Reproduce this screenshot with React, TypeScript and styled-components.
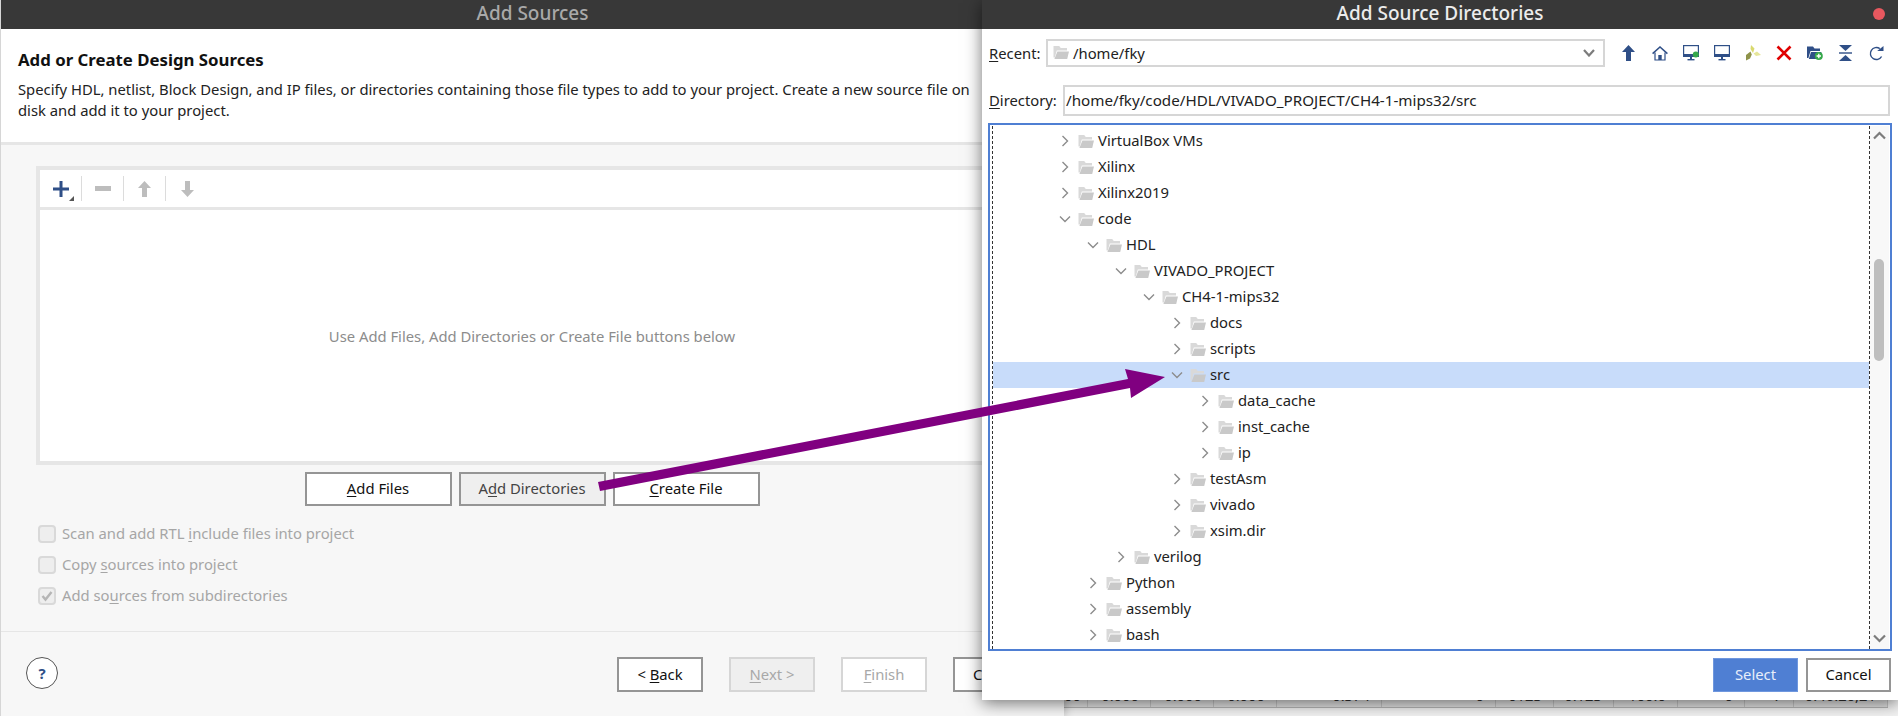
import React from "react";
import styled, { createGlobalStyle } from "styled-components";

const Global = createGlobalStyle`
  html, body { margin: 0; padding: 0; width: 1898px; height: 716px; overflow: hidden; }
  body { font-family: "Noto Sans", "Liberation Sans", sans-serif; font-size: 14.8px; color: #1a1a1a; background: #f3f3f3; }
  * { box-sizing: border-box; }
`;

const Desktop = styled.div`
  position: relative;
  display: flex;
  width: 1898px;
  height: 716px;
  overflow: hidden;
`;
const TitleBar = styled.div<{ $active?: boolean }>`
  flex: none;
  height: 29px;
  background: #383838;
  display: flex;
  align-items: center;
  justify-content: center;
  padding-bottom: 2px;
  font-size: 19px;
  font-weight: 500;
  line-height: 27px;
  color: ${(p) => (p.$active ? "#ececec" : "#a9a9a9")};
`;
const LeftDialog = styled.div`
  flex: none;
  width: 1064px;
  height: 716px;
  display: flex;
  flex-direction: column;
  background: #f7f7f7;
  border-left: 1px solid #d6d6d6;
  box-shadow: 0 0 10px rgba(0, 0, 0, 0.3);
  position: relative;
  z-index: 1;
`;
const Header = styled.div`
  flex: none;
  height: 116px;
  background: #fff;
  border-bottom: 3px solid #e6e6e6;
  padding: 19px 0 0 17px;
`;
const Heading = styled.div`
  font-size: 16.8px;
  font-weight: 700;
  line-height: 24px;
  color: #111;
`;
const Description = styled.div`
  margin-top: 7px;
  width: 968px;
  font-size: 14.8px;
  line-height: 21px;
  color: #222;
`;
const Content = styled.div`
  flex: 1;
  padding: 21px 35px 0;
  display: flex;
  flex-direction: column;
`;
const Panel = styled.div`
  height: 299px;
  width: 992px;
  border: 4px solid #e6e6e6;
  background: #fff;
  display: flex;
  flex-direction: column;
`;
const PanelToolbar = styled.div`
  flex: none;
  height: 40px;
  padding-top: 6px;
  border-bottom: 3px solid #e6e6e6;
  display: flex;
  align-items: flex-start;
`;
const ToolButton = styled.div<{ $last?: boolean }>`
  position: relative;
  width: 42px;
  height: 25px;
  display: flex;
  align-items: center;
  justify-content: center;
  border-right: ${(p) => (p.$last ? "none" : "1px solid #dcdcdc")};
`;
const CornerMark = styled.span`
  position: absolute;
  right: 7px;
  bottom: 0;
  width: 0;
  height: 0;
  border-left: 5px solid transparent;
  border-bottom: 5px solid #555;
`;
const PanelHint = styled.div`
  flex: 1;
  display: flex;
  align-items: center;
  justify-content: center;
  color: #8c8c8c;
  font-size: 14.8px;
`;
const ActionRow = styled.div`
  width: 992px;
  margin-top: 7px;
  display: flex;
  justify-content: center;
  gap: 7px;
`;
const Button = styled.div<{ $w: number; $h: number; $state?: "hover" | "off" | "offFill" }>`
  flex: none;
  width: ${(p) => p.$w}px;
  height: ${(p) => p.$h}px;
  padding-bottom: 2px;
  display: flex;
  align-items: center;
  justify-content: center;
  white-space: pre;
  font-size: 14.8px;
  border: 2px solid ${(p) => (p.$state === "off" || p.$state === "offFill" ? "#d6d6d6" : "#959595")};
  background: ${(p) => (p.$state === "hover" || p.$state === "offFill" ? "#efefef" : "#fff")};
  color: ${(p) => (p.$state === "hover" ? "#444" : p.$state ? "#a8a8a8" : "#111")};
`;
const Mn = styled.span`
  text-decoration: underline;
  text-underline-offset: 2px;
`;
const Options = styled.div`
  margin: 19px 0 0 2px;
  display: flex;
  flex-direction: column;
  gap: 13px;
`;
const Option = styled.div`
  height: 18px;
  display: flex;
  align-items: center;
  gap: 6px;
  color: #a6a6a6;
  font-size: 14.8px;
`;
const OptionText = styled.span`
  margin-top: -2px;
`;
const CheckBox = styled.div`
  width: 18px;
  height: 18px;
  border: 2px solid #d9d9d9;
  border-radius: 4px;
  background: #eeeeee;
  display: flex;
  align-items: center;
  justify-content: center;
`;
const Footer = styled.div`
  flex: none;
  height: 85px;
  border-top: 1px solid #e6e6e6;
  padding: 25px 25px 0;
  display: flex;
  justify-content: space-between;
  align-items: flex-start;
`;
const HelpButton = styled.div`
  width: 32px;
  height: 32px;
  border-radius: 50%;
  border: 1px solid #555;
  background: #fff;
  display: flex;
  align-items: center;
  justify-content: center;
  color: #2f4f87;
  font-size: 15px;
  font-weight: 700;
`;
const NavButtons = styled.div`
  display: flex;
  gap: 26px;
`;

const BackWindow = styled.div`
  flex: 1;
  padding-bottom: 8px;
  display: flex;
  flex-direction: column;
  justify-content: flex-end;
  background: #f3f3f3;
`;
const TableRow = styled.div`
  height: 18px;
  width: 824px;
  display: flex;
  border-bottom: 1px solid #b8b8b8;
  font-size: 14.8px;
  line-height: 11px;
  color: #333;
  background: #e4e4e4;
`;
const TableCell = styled.div<{ $w: number }>`
  flex: none;
  width: ${(p) => p.$w}px;
  padding-right: 11px;
  text-align: right;
  white-space: nowrap;
  overflow: hidden;
  border-right: 1px solid #c8c8c8;
`;

const SourceWindow = styled.div`
  position: absolute;
  left: 982px;
  top: 0;
  width: 916px;
  height: 700px;
  z-index: 2;
  background: #fff;
  display: flex;
  flex-direction: column;
  box-shadow: 0 3px 16px rgba(0, 0, 0, 0.55);
`;
const CloseDot = styled.span`
  position: absolute;
  right: 13px;
  top: 8px;
  width: 12px;
  height: 12px;
  border-radius: 50%;
  background: #e8585f;
`;
const WindowBody = styled.div`
  flex: 1;
  padding: 10px 6px 0 6px;
  display: flex;
  flex-direction: column;
`;
const RecentRow = styled.div`
  height: 28px;
  display: flex;
  align-items: center;
`;
const FieldLabel = styled.div<{ $w: number }>`
  flex: none;
  width: ${(p) => p.$w}px;
  padding-left: 1px;
  padding-bottom: 1px;
  font-size: 14.8px;
  color: #222;
`;
const Combo = styled.div`
  flex: none;
  width: 559px;
  height: 28px;
  border: 2px solid #d6d6d6;
  display: flex;
  align-items: center;
  gap: 4px;
  padding: 0 8px 1px 5px;
  font-size: 14.8px;
  color: #222;
`;
const ComboArrow = styled.svg`
  margin-left: auto;
`;
const IconStrip = styled.div`
  display: flex;
  margin-left: 8px;
`;
const IconSlot = styled.div`
  width: 31px;
  height: 28px;
  display: flex;
  align-items: center;
  justify-content: center;
`;
const DirectoryRow = styled.div`
  margin-top: 18px;
  height: 31px;
  display: flex;
  align-items: center;
`;
const DirectoryInput = styled.div`
  flex: none;
  width: 827px;
  height: 31px;
  border: 2px solid #d6d6d6;
  display: flex;
  align-items: center;
  padding: 0 0 2px 1px;
  font-size: 15.2px;
  color: #222;
`;
const TreeFrame = styled.div`
  margin-top: 7px;
  width: 904px;
  height: 528px;
  border: 2px solid #4f7fd3;
  display: flex;
  padding: 1px 1px 0 2px;
`;
const TreePane = styled.div`
  flex: 1;
  min-width: 0;
  border-left: 1px dashed #333;
  border-right: 1px dashed #333;
  padding-top: 2px;
  display: flex;
  flex-direction: column;
  height: 523px;
`;
const Row = styled.div<{ $level: number; $selected?: boolean }>`
  flex: none;
  height: 26px;
  display: flex;
  align-items: center;
  padding-left: ${(p) => 64 + p.$level * 28}px;
  background: ${(p) => (p.$selected ? "#c8dcfa" : "transparent")};
  font-size: 14.8px;
  color: #222;
`;
const RowChevron = styled.div`
  flex: none;
  width: 16px;
  height: 16px;
  display: flex;
  align-items: center;
  justify-content: center;
  margin-right: 5px;
`;
const RowLabel = styled.span`
  margin: -2px 0 0 4px;
  white-space: nowrap;
`;
const ScrollTrack = styled.div`
  position: relative;
  flex: none;
  width: 19px;
  height: 523px;
  background: #f8f8f8;
`;
const ScrollEnd = styled.svg<{ $top: number }>`
  position: absolute;
  left: 3px;
  top: ${(p) => p.$top}px;
`;
const ScrollThumb = styled.div`
  position: absolute;
  left: 4px;
  top: 133px;
  width: 10px;
  height: 102px;
  border-radius: 5px;
  background: #bebebe;
`;
const WindowFooter = styled.div`
  margin-top: 7px;
  width: 903px;
  display: flex;
  justify-content: flex-end;
  gap: 8px;
`;
const PrimaryButton = styled.div`
  width: 85px;
  height: 34px;
  padding-bottom: 2px;
  background: #4f7fd3;
  border: 1px solid #6f97de;
  color: #e8eefa;
  display: flex;
  align-items: center;
  justify-content: center;
  font-size: 14.8px;
`;
const ArrowOverlay = styled.svg`
  position: absolute;
  left: 0;
  top: 0;
  z-index: 3;
  pointer-events: none;
`;

const BLUE = "#2f4f87";

const FolderIcon = () => (
  <svg width="16" height="15" viewBox="0 0 16 15">
    <path d="M.5 1h5.7l1.6 2H14v2.6H3.8L1.8 12.5H.5Z" fill="#d9d9d9" />
    <path d="M4.4 6.6H16l-1.8 7.4H1.4Z" fill="#c9c9c9" />
  </svg>
);
const Chevron = ({ open }: { open: boolean }) => (
  <svg width="14" height="14" viewBox="0 0 14 14">
    <path
      d={open ? "M2 4.5 7 9.5 12 4.5" : "M4.5 2 9.5 7 4.5 12"}
      fill="none"
      stroke="#8c8c8c"
      strokeWidth="1.4"
    />
  </svg>
);

const UpArrow = ({ c = BLUE }: { c?: string }) => (
  <svg width="13" height="16" viewBox="0 0 13 16">
    <path d="M6.5 0 13 7H9V16H4V7H0Z" fill={c} />
  </svg>
);
const DownArrow = () => (
  <svg width="13" height="16" viewBox="0 0 13 16">
    <path d="M6.5 16 13 9H9V0H4V9H0Z" fill="#bdbdbd" />
  </svg>
);
const HomeIcon = () => (
  <svg width="16" height="15" viewBox="0 0 16 15">
    <path d="M.6 7.6 8 1l7.4 6.6" fill="none" stroke={BLUE} strokeWidth="1.5" />
    <path d="M3 6.5V14H13V6.5" fill="none" stroke={BLUE} strokeWidth="1.2" />
    <rect x="6.3" y="9" width="3.4" height="5" fill={BLUE} />
  </svg>
);
const MonitorIcon = ({ net }: { net?: boolean }) => (
  <svg width="16" height="16" viewBox="0 0 16 16">
    <rect x=".6" y=".6" width="14.8" height="10.8" fill="#fff" stroke={BLUE} strokeWidth="1.2" />
    <rect x="0" y="9" width="16" height="3" fill={BLUE} />
    <rect x="7" y="12" width="2" height="2.5" fill={BLUE} />
    <rect x="4.5" y="14" width="7" height="1.4" fill={BLUE} />
    {net && <circle cx="12.8" cy="9.6" r="3" fill="#35a84a" />}
  </svg>
);
const LeafIcon = () => (
  <svg width="16" height="16" viewBox="0 0 16 16">
    <path d="M6 0 9.5 3.5 8 8 5.5 4Z" fill="#d9d96e" />
    <path d="M8.5 8.5 12 6.5 16 10 11 11Z" fill="#e6e69a" />
    <path d="M5.5 6.5 6.8 9.5 5 13.5 1 15.5 1 10Z" fill="#8f934a" />
  </svg>
);
const CrossIcon = () => (
  <svg width="16" height="16" viewBox="0 0 16 16">
    <path d="M1.5 1.5 14.5 14.5M14.5 1.5 1.5 14.5" stroke="#e00000" strokeWidth="2.6" />
  </svg>
);
const NewFolderIcon = () => (
  <svg width="16" height="16" viewBox="0 0 16 16">
    <path d="M0 1.5h6l1.5 2H13V6H3.5L1.4 13H0Z" fill={BLUE} />
    <path d="M4 7H14.5L12.5 14H1.8Z" fill={BLUE} />
    <circle cx="11.8" cy="11" r="4" fill="#35a84a" />
    <path d="M9.6 11h4.4M11.8 8.8v4.4" stroke="#fff" strokeWidth="1.3" />
  </svg>
);
const CollapseIcon = () => (
  <svg width="13" height="16" viewBox="0 0 13 16">
    <path d="M0 0H13L6.5 6Z" fill={BLUE} />
    <rect y="7.3" width="13" height="1.4" fill={BLUE} />
    <path d="M0 16H13L6.5 10Z" fill={BLUE} />
  </svg>
);
const RefreshIcon = () => (
  <svg width="15" height="15" viewBox="0 0 15 15">
    <path d="M12.6 10.5A6 6 0 1 1 10.8 2.6" fill="none" stroke={BLUE} strokeWidth="1.4" />
    <path d="M8.2 5H14.5V0Z" fill={BLUE} />
  </svg>
);

const rows: [string, number, boolean][] = [
  ["VirtualBox VMs", 0, false],
  ["Xilinx", 0, false],
  ["Xilinx2019", 0, false],
  ["code", 0, true],
  ["HDL", 1, true],
  ["VIVADO_PROJECT", 2, true],
  ["CH4-1-mips32", 3, true],
  ["docs", 4, false],
  ["scripts", 4, false],
  ["src", 4, true],
  ["data_cache", 5, false],
  ["inst_cache", 5, false],
  ["ip", 5, false],
  ["testAsm", 4, false],
  ["vivado", 4, false],
  ["xsim.dir", 4, false],
  ["verilog", 2, false],
  ["Python", 1, false],
  ["assembly", 1, false],
  ["bash", 1, false],
];

const tableCells: [string, number][] = [
  ["00", 24],
  ["0.000", 63],
  ["0.000", 63],
  ["0.000", 63],
  ["0.374", 105],
  ["0", 114],
  ["0123", 58],
  ["0.123", 60],
  ["100.0", 64],
  ["0", 67],
  ["7", 49],
  ["0:46:20,21", 94],
];

export default function App() {
  return (
    <Desktop>
      <Global />
      <LeftDialog>
        <TitleBar>Add Sources</TitleBar>
        <Header>
          <Heading>Add or Create Design Sources</Heading>
          <Description>
            Specify HDL, netlist, Block Design, and IP files, or directories containing those file types to add to your project. Create a new source file on disk and add it to your project.
          </Description>
        </Header>
        <Content>
          <Panel>
            <PanelToolbar>
              <ToolButton>
                <svg width="16" height="16" viewBox="0 0 16 16">
                  <path d="M8 0V16M0 8H16" stroke={BLUE} strokeWidth="3" />
                </svg>
                <CornerMark />
              </ToolButton>
              <ToolButton>
                <svg width="16" height="6" viewBox="0 0 16 6">
                  <rect width="16" height="5" fill="#bdbdbd" />
                </svg>
              </ToolButton>
              <ToolButton>
                <UpArrow c="#bdbdbd" />
              </ToolButton>
              <ToolButton $last>
                <DownArrow />
              </ToolButton>
            </PanelToolbar>
            <PanelHint>Use Add Files, Add Directories or Create File buttons below</PanelHint>
          </Panel>
          <ActionRow>
            <Button $w={147} $h={34}><span><Mn>A</Mn>dd Files</span></Button>
            <Button $w={147} $h={34} $state="hover"><span>A<Mn>d</Mn>d Directories</span></Button>
            <Button $w={147} $h={34}><span><Mn>C</Mn>reate File</span></Button>
          </ActionRow>
          <Options>
            <Option><CheckBox /><OptionText>Scan and add RTL <Mn>i</Mn>nclude files into project</OptionText></Option>
            <Option><CheckBox /><OptionText>Copy <Mn>s</Mn>ources into project</OptionText></Option>
            <Option>
              <CheckBox>
                <svg width="12" height="12" viewBox="0 0 12 12">
                  <path d="M1.5 6 4.5 9.5 10.5 2" fill="none" stroke="#b5b5b5" strokeWidth="2.4" />
                </svg>
              </CheckBox>
              <OptionText>Add so<Mn>u</Mn>rces from subdirectories</OptionText>
            </Option>
          </Options>
        </Content>
        <Footer>
          <HelpButton>?</HelpButton>
          <NavButtons>
            <Button $w={86} $h={35}><span>{"< "}<Mn>B</Mn>ack</span></Button>
            <Button $w={86} $h={35} $state="offFill"><span><Mn>N</Mn>ext {">"}</span></Button>
            <Button $w={86} $h={35} $state="off"><span><Mn>F</Mn>inish</span></Button>
            <Button $w={86} $h={35}>Cancel</Button>
          </NavButtons>
        </Footer>
      </LeftDialog>

      <BackWindow>
        <TableRow>
          {tableCells.map(([t, w], i) => (
            <TableCell key={i} $w={w}>{t}</TableCell>
          ))}
        </TableRow>
      </BackWindow>

      <SourceWindow>
        <TitleBar $active>Add Source Directories</TitleBar>
        <CloseDot />
        <WindowBody>
          <RecentRow>
            <FieldLabel $w={58}><Mn>R</Mn>ecent:</FieldLabel>
            <Combo>
              <FolderIcon />
              <span>/home/fky</span>
              <ComboArrow width="12" height="8" viewBox="0 0 12 8">
                <path d="M1 1 6 6.5 11 1" fill="none" stroke="#7c7c7c" strokeWidth="2.2" />
              </ComboArrow>
            </Combo>
            <IconStrip>
              <IconSlot><UpArrow /></IconSlot>
              <IconSlot><HomeIcon /></IconSlot>
              <IconSlot><MonitorIcon net /></IconSlot>
              <IconSlot><MonitorIcon /></IconSlot>
              <IconSlot><LeafIcon /></IconSlot>
              <IconSlot><CrossIcon /></IconSlot>
              <IconSlot><NewFolderIcon /></IconSlot>
              <IconSlot><CollapseIcon /></IconSlot>
              <IconSlot><RefreshIcon /></IconSlot>
            </IconStrip>
          </RecentRow>
          <DirectoryRow>
            <FieldLabel $w={75}><Mn>D</Mn>irectory:</FieldLabel>
            <DirectoryInput>/home/fky/code/HDL/VIVADO_PROJECT/CH4-1-mips32/src</DirectoryInput>
          </DirectoryRow>
          <TreeFrame>
            <TreePane>
              {rows.map(([name, level, open]) => (
                <Row key={name} $level={level} $selected={name === "src"}>
                  <RowChevron><Chevron open={open} /></RowChevron>
                  <FolderIcon />
                  <RowLabel>{name}</RowLabel>
                </Row>
              ))}
            </TreePane>
            <ScrollTrack>
              <ScrollEnd $top={5} width="13" height="9" viewBox="0 0 13 9">
                <path d="M1 7.5 6.5 2 12 7.5" fill="none" stroke="#7c7c7c" strokeWidth="2.2" />
              </ScrollEnd>
              <ScrollThumb />
              <ScrollEnd $top={508} width="13" height="9" viewBox="0 0 13 9">
                <path d="M1 1.5 6.5 7 12 1.5" fill="none" stroke="#7c7c7c" strokeWidth="2.2" />
              </ScrollEnd>
            </ScrollTrack>
          </TreeFrame>
          <WindowFooter>
            <PrimaryButton>Select</PrimaryButton>
            <Button $w={85} $h={34}>Cancel</Button>
          </WindowFooter>
        </WindowBody>
      </SourceWindow>

      <ArrowOverlay width="1898" height="716" viewBox="0 0 1898 716">
        <polygon points="598,482 600,491 1130,388 1131,398 1165,377 1125,369 1128,379" fill="#800080" />
      </ArrowOverlay>
    </Desktop>
  );
}
